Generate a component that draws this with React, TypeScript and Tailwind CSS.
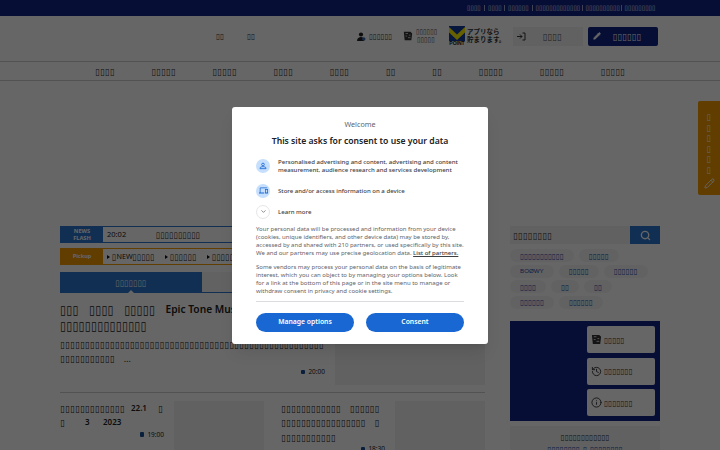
import { ChevronDown, History, Info, Pencil, Search } from 'lucide-react'

const topLinks = [
  { chars: 4, width: 'w-[21px]' },
  { chars: 4, width: 'w-[20px]' },
  { chars: 6, width: 'w-[27.5px]' },
  { chars: 13, width: 'w-[50px]' },
  { chars: 10, width: 'w-[39px]' },
  { chars: 9, width: 'w-[33px]' },
]

const navItems = [4, 5, 5, 4, 4, 2, 2, 5, 5, 5]

const tagRows = [
  ['11', '5'],
  ['BOØWY', '5', '6'],
  ['4', '2', '2'],
  ['6', '6'],
]

// Run of missing-glyph boxes
function Tofu({ n, className = '' }: { n: number; className?: string }) {
  return (
    <span className={`font-normal whitespace-nowrap ${className}`}>
      <span className="font-['DejaVu_Sans_Condensed','DejaVu_Sans',sans-serif] text-[0.86em] leading-none tracking-[0.02em]">
        {'▯'.repeat(n)}
      </span>
    </span>
  )
}

function CardIcon({ className = '' }: { className?: string }) {
  return (
    <svg viewBox="0 0 12 12" className={className}>
      <path d="M1 1h8l2 2-1 8H2z" fill="#333" />
      <path d="M3 3h3M3 6h2M7 5h2M6 8h3" stroke="#ddd" strokeWidth="1" />
    </svg>
  )
}

function Time({ value }: { value: string }) {
  return (
    <span className="flex items-center gap-[3px] text-[6.5px] leading-[10px]">
      <span className="h-[4.5px] w-[4px] rounded-[1px] bg-[#1b4f96]" />
      {value}
    </span>
  )
}

function Marker() {
  return (
    <svg viewBox="0 0 3 4" className="h-[4px] w-[3px] shrink-0">
      <path d="M0 0l3 2-3 2z" fill="#111" />
    </svg>
  )
}

function Header() {
  return (
    <header>
      <div className="flex h-4 items-center bg-[#0f2387] pl-[467px] text-[7.8px] leading-none text-white">
        {topLinks.map((link, index) => (
          <span key={index} className={`flex shrink-0 items-center justify-between pr-[3px] ${link.width}`}>
            <Tofu n={link.chars} />
            {index < topLinks.length - 1 && <span className="h-[6px] w-px bg-white/60" />}
          </span>
        ))}
      </div>

      <div className="flex h-[45px] items-center pb-[5px] text-[9px] leading-none text-[#333]">
        <Tofu n={2} className="ml-[216px] w-[31px]" />
        <Tofu n={2} className="w-[110px]" />
        <svg viewBox="0 0 9 9" className="mr-[3px] size-[9px] shrink-0">
          <circle cx="4" cy="2.5" r="2.1" fill="#222" />
          <path d="M0 9c0-3 2-4 4-4s3 1 3 4z" fill="#222" />
          <circle cx="6.8" cy="7" r="1.7" fill="#3b6cb5" />
        </svg>
        <Tofu n={6} className="w-[34px] text-[8.7px]" />
        <CardIcon className="mr-[3px] size-[10px] shrink-0" />
        <span className="flex w-[33px] shrink-0 flex-col items-start text-[8px] leading-[6px]">
          <Tofu n={6} />
          <Tofu n={5} className="ml-px" />
        </span>
        <span className="flex w-[16px] shrink-0 flex-col items-center">
          <svg viewBox="0 0 16 16" className="h-[15px] w-[16px]" preserveAspectRatio="none">
            <path d="M0 0h16v16H0z" fill="#123a9c" />
            <path d="M0 1l8 8 8-8v6l-8 8-8-8z" fill="#fff000" />
          </svg>
          <span className="font-['Liberation_Sans'] text-[5px] leading-[5px] font-bold text-[#111]">POINT</span>
        </span>
        <span className="ml-[2px] w-[46px] shrink-0 pb-[2px] font-['Noto_Sans_CJK_JP',sans-serif] text-[6.5px] leading-[8px] font-bold whitespace-nowrap">
          <span className="block">アプリなら</span>
          <span className="block">貯まります。</span>
        </span>
        <span className="flex h-[19px] w-[70px] shrink-0 items-center bg-[#f2f2f2] pl-[4px] text-[10.7px]">
          <svg viewBox="0 0 9 9" className="size-[9px]" fill="none" stroke="#333">
            <path d="M0 4.5h5M3 2.5l2 2-2 2M5.5 1H8v7H5.5" />
          </svg>
          <Tofu n={4} className="ml-[17px] text-[#555]" />
        </span>
        <span className="ml-[5px] flex h-[19px] w-[70px] shrink-0 items-center rounded-[2px] bg-[#0f2387] pl-[5px] text-[10.7px] text-white">
          <Pencil className="size-[8px] fill-white" />
          <Tofu n={6} className="ml-[12px]" />
        </span>
      </div>

      <nav className="flex h-[20px] items-center justify-center gap-[36.7px] border-y border-[#ccc] text-[11px] leading-none text-[#333]">
        {navItems.map((chars, index) => (
          <Tofu key={index} n={chars} />
        ))}
      </nav>
    </header>
  )
}

function Feed() {
  return (
    <div className="w-[425px] shrink-0 text-[#222]">
      <div className="flex h-[17px] items-center border border-[#2b76cf] text-[7.5px] leading-none">
        <span className="flex h-[17px] w-[42px] shrink-0 items-center justify-center bg-[#2b76cf] text-center text-[5.7px] leading-[6.5px] font-bold text-white">
          NEWS
          <br />
          FLASH
        </span>
        <span className="ml-[4px] w-[49px]">20:02</span>
        <Tofu n={10} className="text-[10px]" />
      </div>

      <div className="mt-[5px] flex h-[17px] items-center border border-[#f39800] text-[7.2px] leading-none whitespace-nowrap">
        <span className="flex h-[17px] w-[42px] shrink-0 items-center justify-center bg-[#f39800] text-[5.6px] font-bold text-white">
          Pickup
        </span>
        <span className="ml-[4px] flex w-[58px] shrink-0 items-center gap-[2px]">
          <Marker />
          <span className="flex items-center">
            <Tofu n={1} className="text-[10px]" />
            NEW
            <Tofu n={5} className="text-[10px]" />
          </span>
        </span>
        <span className="flex w-[42px] shrink-0 items-center gap-[2px]">
          <Marker />
          <Tofu n={6} className="text-[10px]" />
        </span>
        <span className="flex shrink-0 items-center gap-[2px]">
          <Marker />
          <Tofu n={9} className="text-[10px]" />
        </span>
      </div>

      <div className="mt-[7px] flex h-[21px] border-b border-[#2b76cf] text-[10px] leading-none">
        <span className="relative flex w-[142px] items-center justify-center bg-[#2b76cf] text-white">
          <Tofu n={7} />
          <svg viewBox="0 0 6 3" className="absolute -bottom-px left-[68px] h-[3px] w-[6px]">
            <path d="M0 3l3-3 3 3z" fill="#fff" />
          </svg>
        </span>
        <span className="flex-1 bg-[#f5f5f5]" />
      </div>

      <article className="flex h-[99.5px] border-b border-[#ccc]">
        <div className="w-[275px] shrink-0 pt-[7.5px]">
          <h2 className="text-[14px] leading-[16px] whitespace-nowrap">
            <span className="flex gap-[10.4px]">
              <Tofu n={3} />
              <Tofu n={4} />
              <Tofu n={5} />
              <span className="text-[10.2px] font-semibold">Epic Tone Music</span>
            </span>
            <Tofu n={14} className="block" />
          </h2>
          <p className="mt-[4px] text-[11.25px] leading-[14.7px] whitespace-nowrap">
            <Tofu n={53} className="block" />
            <Tofu n={11} />
            <span className="ml-[9px] text-[9px] leading-none">…</span>
          </p>
          <div className="mt-px flex justify-end pr-[10px]">
            <Time value="20:00" />
          </div>
        </div>
        <div className="mt-[10px] h-[82px] w-[150px] bg-[#f3f3f3]" />
      </article>

      <div className="flex pt-[8px] text-[11.25px] leading-[14.5px] whitespace-nowrap">
        <div className="w-[114px] shrink-0">
          <div className="flex">
            <Tofu n={13} className="w-[71px]" />
            <span className="w-[27px] text-[8px] font-semibold">22.1</span>
            <Tofu n={1} />
          </div>
          <div className="flex">
            <Tofu n={1} className="w-[25px]" />
            <span className="w-[18px] text-[8px] font-semibold">3</span>
            <span className="text-[8px] font-semibold">2023</span>
          </div>
          <div className="flex justify-end pr-[10px]">
            <Time value="19:00" />
          </div>
        </div>
        <div className="h-[52px] w-[90px] shrink-0 bg-[#f3f3f3]" />
        <div className="ml-[17px] w-[114px] shrink-0">
          <div className="flex gap-[9px]">
            <Tofu n={12} />
            <Tofu n={6} />
          </div>
          <div className="flex gap-[9px]">
            <Tofu n={17} />
            <Tofu n={1} />
          </div>
          <Tofu n={11} className="block" />
          <div className="flex justify-end pr-[10px]">
            <Time value="18:30" />
          </div>
        </div>
        <div className="h-[52px] w-[90px] shrink-0 bg-[#f3f3f3]" />
      </div>
    </div>
  )
}

function Sidebar() {
  return (
    <aside className="ml-[25px] w-[150px] shrink-0 text-[#333]">
      <div className="flex h-[18px]">
        <span className="flex w-[120px] items-center bg-[#f2f2f2] pl-[3px] text-[11px] leading-none">
          <Tofu n={8} />
        </span>
        <span className="flex w-[30px] items-center justify-center bg-[#2b76cf] text-white">
          <Search className="size-[11px]" strokeWidth={3} />
        </span>
      </div>

      <div className="mt-[5px] flex h-[72px] flex-col gap-[2.5px] text-[9px] leading-none text-[#1c4faf]">
        {tagRows.map((row, index) => (
          <div key={index} className="flex gap-[5px]">
            {row.map((tag, i) => (
              <span key={i} className="flex h-[13px] items-center rounded-full bg-[#f5f5f5] px-[10px]">
                {Number(tag) ? (
                  <Tofu n={Number(tag)} />
                ) : (
                  <span className="font-['Liberation_Sans'] text-[6.2px]">{tag}</span>
                )}
              </span>
            ))}
          </div>
        ))}
      </div>

      <div className="flex h-[100px] flex-col items-end justify-between bg-[#0f2387] p-[5px] text-[9.2px] leading-none">
        <span className="flex h-[27px] w-[68px] items-center gap-[2px] rounded-[2px] bg-white pl-[4px]">
          <CardIcon className="size-[11px]" />
          <Tofu n={5} />
        </span>
        <span className="flex h-[27px] w-[68px] items-center gap-[2px] rounded-[2px] bg-white pl-[4px]">
          <History className="size-[11px]" />
          <Tofu n={7} />
        </span>
        <span className="flex h-[27px] w-[68px] items-center gap-[2px] rounded-[2px] bg-white pl-[4px]">
          <Info className="size-[11px]" />
          <Tofu n={7} />
        </span>
      </div>

      <div className="mt-[5px] flex h-[60px] flex-col items-center bg-[#f2f2f2] pt-[6px] text-[9.2px] leading-[10px]">
        <Tofu n={12} />
        <span className="mt-[2px] flex gap-[3px] text-[#1c4faf]">
          <Tofu n={8} />
          <Tofu n={1} />
          <Tofu n={8} />
        </span>
      </div>
    </aside>
  )
}

function ConsentDialog() {
  return (
    <div className="absolute top-[107px] left-[232px] h-[236.5px] w-[256px] rounded-[3px] bg-white px-[24px] text-[#5f6368] shadow-lg">
      <p className="pt-[12px] text-center text-[7.2px] leading-[10px]">Welcome</p>
      <h1 className="mt-[5px] text-center text-[8.65px] leading-[14px] font-semibold whitespace-nowrap text-[#202124]">
        This site asks for consent to use your data
      </h1>

      <div className="mt-[10px] text-[6.05px] leading-[8px] font-medium whitespace-nowrap text-[#3c4043]">
        <div className="flex h-[16px] items-center gap-[8px]">
          <span className="flex size-[14px] shrink-0 items-center justify-center rounded-full bg-[#c6dffc] text-[#1967d2]">
            <svg viewBox="0 0 24 24" className="size-[8px]" fill="none" stroke="currentColor" strokeWidth="2.5">
              <circle cx="12" cy="7.5" r="4" />
              <path d="M3 20v-2c0-3 6-4 9-4s9 1 9 4v2z" />
            </svg>
          </span>
          <span>
            Personalised advertising and content, advertising and content
            <br />
            measurement, audience research and services development
          </span>
        </div>
        <div className="mt-[8.5px] flex h-[16px] items-center gap-[8px]">
          <span className="flex size-[14px] shrink-0 items-center justify-center rounded-full bg-[#c6dffc] text-[#1967d2]">
            <svg viewBox="0 0 24 24" className="size-[9px]" fill="currentColor">
              <path d="M4 6h18V4H4c-1.1 0-2 .9-2 2v11H0v3h14v-3H4V6zm19 2h-6c-.55 0-1 .45-1 1v10c0 .55.45 1 1 1h6c.55 0 1-.45 1-1V9c0-.55-.45-1-1-1zm-1 9h-4v-7h4v7z" />
            </svg>
          </span>
          <span>Store and/or access information on a device</span>
        </div>
        <div className="mt-[6px] flex h-[14px] items-center gap-[8px]">
          <span className="flex size-[14px] shrink-0 items-center justify-center rounded-full border border-[#e4e6e8]">
            <ChevronDown className="size-[7px]" />
          </span>
          <span>Learn more</span>
        </div>
      </div>

      <p className="mt-[6.5px] text-[6px] leading-[8px] whitespace-nowrap">
        Your personal data will be processed and information from your device
        <br />
        (cookies, unique identifiers, and other device data) may be stored by,
        <br />
        accessed by and shared with 210 partners, or used specifically by this site.
        <br />
        We and our partners may use precise geolocation data.{' '}
        <span className="font-medium text-[#3c4043] underline">List of partners.</span>
      </p>
      <p className="mt-[6px] text-[6px] leading-[8px] whitespace-nowrap">
        Some vendors may process your personal data on the basis of legitimate
        <br />
        interest, which you can object to by managing your options below. Look
        <br />
        for a link at the bottom of this page or in the site menu to manage or
        <br />
        withdraw consent in privacy and cookie settings.
      </p>

      <div className="mt-[6px] flex justify-between border-t border-[#dadce0] pt-[11px]">
        <button className="h-[19px] w-[98px] rounded-full bg-[#1967d2] text-[6.8px] leading-none font-semibold text-white">
          Manage options
        </button>
        <button className="h-[19px] w-[98px] rounded-full bg-[#1967d2] text-[6.8px] leading-none font-semibold text-white">
          Consent
        </button>
      </div>
    </div>
  )
}

export default function App() {
  return (
    <div className="relative h-[450px] w-[720px] overflow-hidden bg-white font-['Noto_Sans',sans-serif]">
      <Header />
      <main className="mt-[145px] flex pl-[60px]">
        <Feed />
        <Sidebar />
      </main>

      <div className="absolute top-[101px] right-0 flex h-[94px] w-[22px] flex-col items-center rounded-l-[2px] bg-[#f39800] pt-[10px] text-[10px] leading-[10.2px] text-white">
        {[0, 1, 2, 3, 4, 5].map((i) => (
          <Tofu key={i} n={1} />
        ))}
        <Pencil className="mt-[3px] size-[11px]" />
      </div>

      <div className="absolute inset-0 bg-black/60" />
      <ConsentDialog />
    </div>
  )
}
